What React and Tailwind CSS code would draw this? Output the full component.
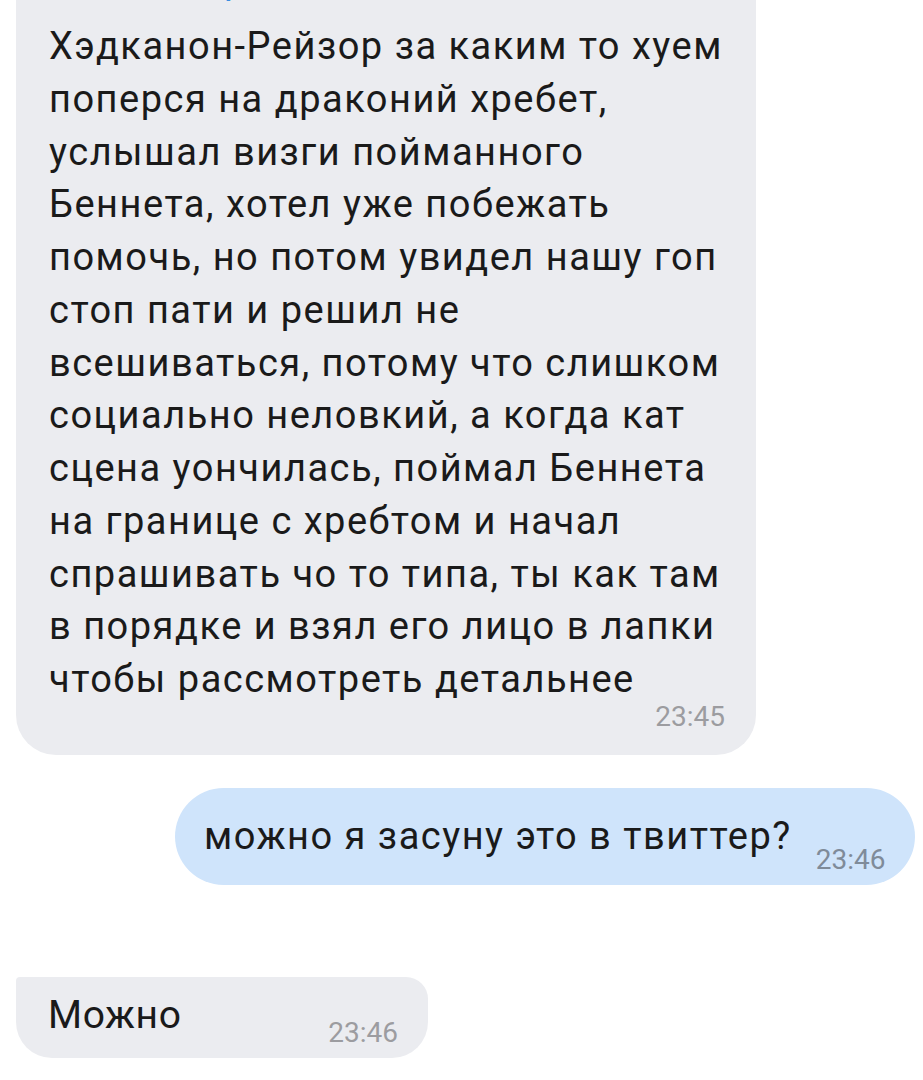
import React from 'react';

const lines = [
  'Хэдканон-Рейзор за каким то хуем',
  'поперся на драконий хребет,',
  'услышал визги пойманного',
  'Беннета, хотел уже побежать',
  'помочь, но потом увидел нашу гоп',
  'стоп пати и решил не',
  'всешиваться, потому что слишком',
  'социально неловкий, а когда кат',
  'сцена уончилась, поймал Беннета',
  'на границе с хребтом и начал',
  'спрашивать чо то типа, ты как там',
  'в порядке и взял его лицо в лапки',
  'чтобы рассмотреть детальнее',
];

const App = () => {
  return (
    <div className="w-[923px] h-[1080px] overflow-hidden bg-white font-['Roboto',sans-serif] text-[#1a1a1a]">
      <div className="flex flex-col mt-[-50px]">
        {/* incoming long message */}
        <div className="ml-[16px] w-[740px] bg-[#ebecf0] rounded-b-[40px] pl-[33px] pr-[31px] pt-[10px] pb-[24px]">
          <div className="h-[50px] leading-[50px] text-[30px] font-medium text-[#3b8ee0] whitespace-nowrap">
            Ангелина Карышкина
          </div>
          <div className="mt-[10px] text-[38px] leading-[52.75px] tracking-[1.5px]">
            {lines.map((line) => (
              <div key={line} className="whitespace-nowrap">{line}</div>
            ))}
          </div>
          <div className="mt-[-3px] text-right text-[28px] leading-[28px] text-[#9c9ca0]">23:45</div>
        </div>

        {/* outgoing */}
        <div className="mt-[33px] ml-[175px] w-[740px] h-[97px] rounded-full bg-[#cfe4fb] flex items-center pl-[29px]">
          <span className="text-[38px] leading-[52px] tracking-[1.5px] whitespace-nowrap">можно я засуну это в твиттер?</span>
          <span className="ml-[24px] mt-[48px] text-[28px] leading-[28px] text-[#7f8b99]">23:46</span>
        </div>

        {/* incoming short */}
        <div className="mt-[92px] ml-[16px] w-[412px] h-[81px] bg-[#ebecf0] rounded-tl-[4px] rounded-tr-[22px] rounded-b-[36px] flex items-center pl-[32px] pr-[30px]">
          <span className="text-[39px] leading-none tracking-[0.6px] mt-[-4px]">Можно</span>
          <span className="ml-auto mt-[32px] text-[28px] leading-[28px] text-[#9c9ca0]">23:46</span>
        </div>
      </div>
    </div>
  );
};

export default App;
